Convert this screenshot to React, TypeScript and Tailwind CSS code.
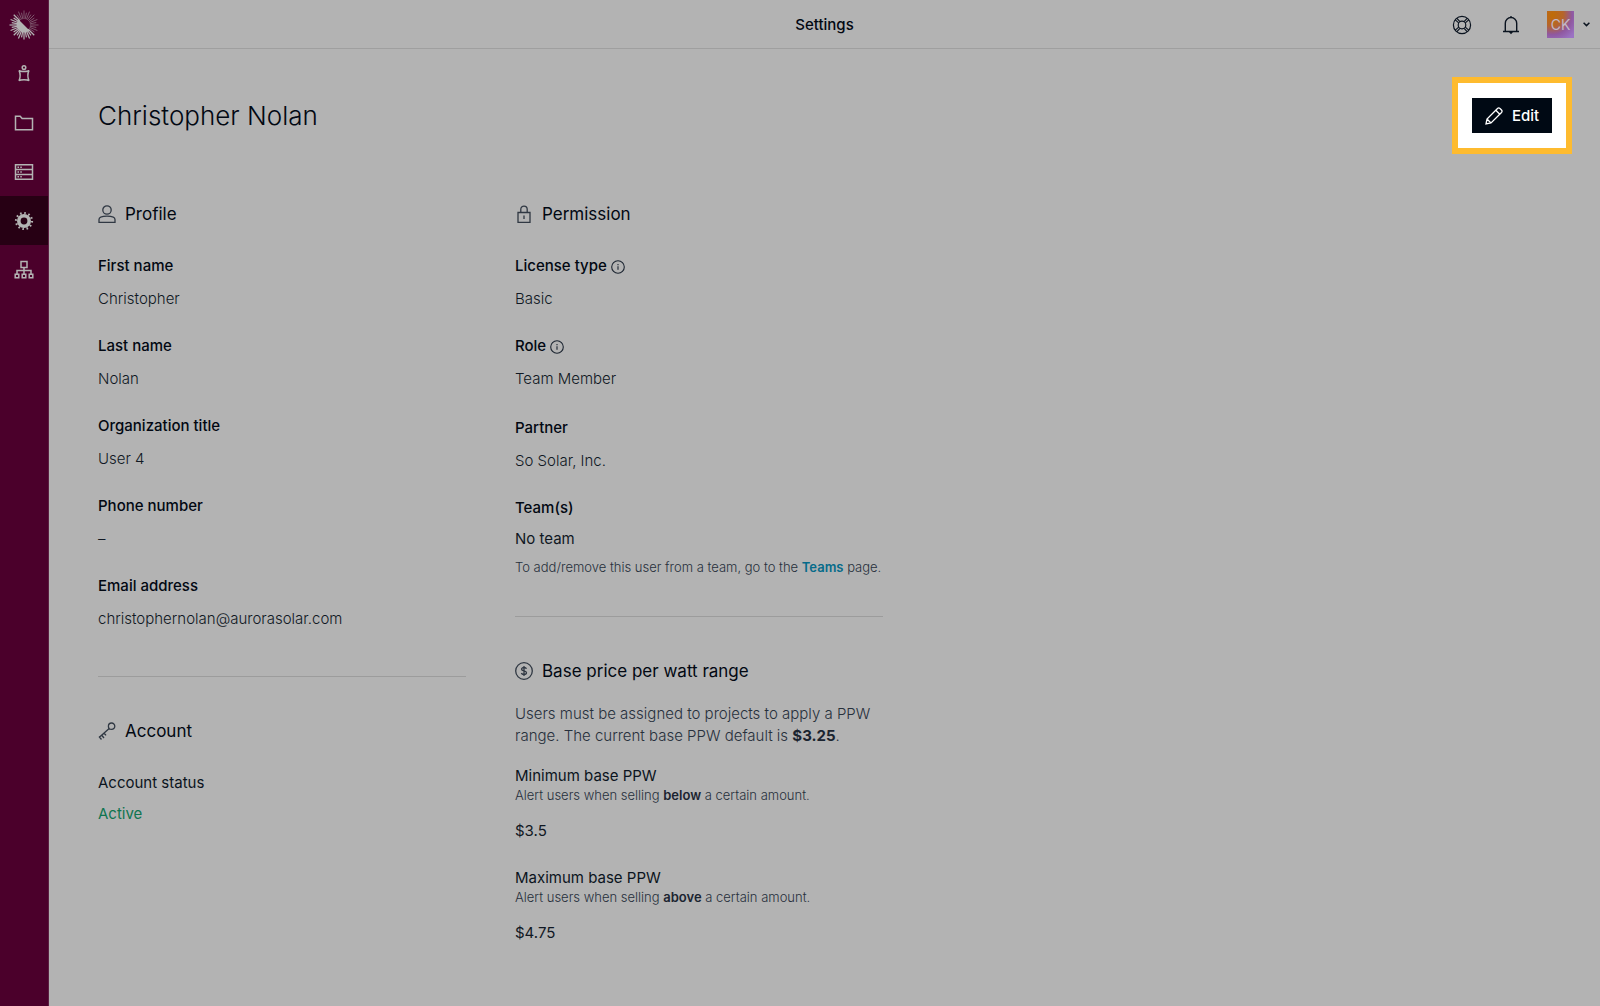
import type { ReactNode } from "react";

const LogoIcon = () => {
  const rays = Array.from({ length: 32 }, (_, i) => (i * Math.PI * 2) / 32);
  return (
    <svg width="30" height="30" viewBox="-15 -15 30 30" aria-hidden="true">
      {rays.map((angle, i) => {
        const x = Math.cos(angle);
        const y = Math.sin(angle);
        const outer = i % 2 ? 12.5 : 14.5;
        const bright = y > x - 0.1;
        return (
          <line
            key={i}
            x1={x * 6}
            y1={y * 6}
            x2={x * outer}
            y2={y * outer}
            stroke="#b3b3b3"
            strokeWidth={bright ? 1.2 : 0.8}
            opacity={bright ? 1 : 0.6}
          />
        );
      })}
      <path d="M-5.5-5.5 5.5 5.5A7.8 7.8 0 0 1-5.5-5.5Z" fill="#b3b3b3" />
    </svg>
  );
};

const navItems: { label: string; active?: boolean; icon: ReactNode }[] = [
  {
    label: "Leads",
    icon: (
      <>
        <circle cx="10" cy="3.6" r="1.8" />
        <path d="M5 6.400c1.300 1.400 8.700 1.400 10 0-1.600 3.400-1.600 6.600 0 10.400-1.300-1.500-8.700-1.500-10 0 1.600-3.800 1.600-7 0-10.400z" />
      </>
    ),
  },
  {
    label: "Projects",
    icon: <path d="M1.500 16.800V3.200h4.700l1.900 2.300h10.400v11.300z" />,
  },
  {
    label: "Database",
    icon: (
      <>
        <path d="M1.500 2.800h17v14.400h-17zM1.500 7.600h17M1.500 12.400h17" />
        <path d="M3.500 5.200h5M3.500 10h5M3.500 14.800h5" strokeDasharray="1.5 1.3" />
      </>
    ),
  },
  {
    label: "Settings",
    active: true,
    icon: (
      <>
        <circle cx="10" cy="10" r="5.2" strokeWidth="3.6" />
        <circle cx="10" cy="10" r="8" strokeWidth="2.2" strokeDasharray="1.6 2.589" />
      </>
    ),
  },
  {
    label: "Organization",
    icon: (
      <path d="M7 1.500h6v6H7zM10 7.500v6M3 13.500V10.500h14v3M1.200 14.200h3.600v3.600H1.200zM8.200 14.200h3.600v3.600H8.200zM15.200 14.200h3.600v3.600h-3.600z" />
    ),
  },
];

const Sidebar = () => (
  <nav className="flex w-[49px] shrink-0 flex-col border-r border-[#5c1f42] bg-[#4b002b]">
    <a href="#home" aria-label="Home" className="flex h-[49px] items-center justify-center">
      <LogoIcon />
    </a>
    {navItems.map(({ label, active, icon }) => (
      <a
        key={label}
        href={`#${label.toLowerCase()}`}
        aria-label={label}
        className={`flex h-[49px] items-center justify-center ${active ? "bg-[#270014]" : ""}`}
      >
        <svg width="20" height="20" viewBox="0 0 20 20" fill="none" stroke="#b3b3b3" strokeWidth="1.5">
          {icon}
        </svg>
      </a>
    ))}
  </nav>
);

const Header = () => (
  <header className="grid h-[49px] shrink-0 grid-cols-[1fr_auto_1fr] items-center border-b border-[#9f9f9f] pt-px pr-[10px]">
    <div />
    <h2 className="pl-[10px] text-[15px] font-medium text-[#020812]">Settings</h2>
    <div className="flex items-center justify-end">
      <button aria-label="Help" className="mr-[29px]">
        <svg width="20" height="20" viewBox="0 0 20 20" fill="none" stroke="#0b1420" strokeWidth="1.2">
          <circle cx="10" cy="10" r="8.6" />
          <circle cx="10" cy="10" r="3.8" />
          <path d="M3.300 4.900l3.400 3M4.900 3.300l3 3.400M16.700 4.900l-3.400 3M15.100 3.300l-3 3.400M3.300 15.100l3.400-3M4.900 16.700l3-3.400M16.700 15.100l-3.400-3M15.100 16.700l-3-3.400" />
        </svg>
      </button>
      <button aria-label="Notifications" className="mr-[26px]">
        <svg width="20" height="20" viewBox="0 0 20 20" fill="none" stroke="#0b1420" strokeWidth="1.4">
          <path d="M2 16.500h16M4.300 16.500V8.200a5.700 5.700 0 0 1 11.400 0v8.300M10 1v1.500" />
          <path d="M8 17h4l-2 2.200z" fill="#0b1420" stroke="none" />
        </svg>
      </button>
      <button aria-label="Account menu" className="flex items-center gap-[9px]">
        <span className="flex size-[27px] items-center justify-center bg-[radial-gradient(circle_at_20%_15%,#c06c05_0%,#b5652b_35%,#8f58a0_62%,#9b73c4_90%)] text-sm text-[#c2b8c8]">
          CK
        </span>
        <svg width="7" height="5" viewBox="0 0 7 5" fill="none" stroke="#0b1420" strokeWidth="1.5">
          <path d="M.6.800l2.900 2.800L6.400.800" />
        </svg>
      </button>
    </div>
  </header>
);

const PencilIcon = () => (
  <svg width="18" height="18" viewBox="0 0 18 18" fill="none" stroke="#fff" strokeWidth="1.3">
    <path d="M1 17l1-5L12.500 1.500c.8-.8 1.800-.6 2.500 0l1.500 1.500c.7.800.7 1.700 0 2.500L6 16zM10.800 3.200l4 4M2 12l4 4" />
  </svg>
);

const InfoIcon = () => (
  <svg width="14" height="14" viewBox="0 0 14 14" fill="none" stroke="#1b2430" strokeWidth="1.1">
    <circle cx="7" cy="7" r="6.300" />
    <path d="M7 6.200v3.600M7 4v1.200" />
  </svg>
);

const SectionTitle = ({ icon, children }: { icon: ReactNode; children: ReactNode }) => (
  <h2 className="flex h-6 items-center gap-[9px] text-[17px] leading-6 text-[#020812]">
    <svg width="18" height="18" viewBox="0 0 18 18" fill="none" stroke="#303843" strokeWidth="1.3">
      {icon}
    </svg>
    {children}
  </h2>
);

const Field = ({ label, info, children }: { label: string; info?: boolean; children: ReactNode }) => (
  <div className="pb-[23px]">
    <dt className="flex items-center gap-1 font-medium text-[#020812]">
      {label}
      {info && (
        <button aria-label={`About ${label}`} className="pt-[2px]">
          <InfoIcon />
        </button>
      )}
    </dt>
    <dd className="mt-[9px] font-light">{children}</dd>
  </div>
);

const PriceLimit = ({ label, word, value }: { label: string; word: string; value: string }) => (
  <div className="pb-[25px]">
    <dt className="leading-5 text-[#0b1420]">{label}</dt>
    <dd>
      <p className="text-[13px] leading-[18px] font-light text-[#27303c]">
        Alert users when selling <strong className="font-semibold text-[#1b2430]">{word}</strong> a certain amount.
      </p>
      <p className="mt-[15px]">{value}</p>
    </dd>
  </div>
);

const App = () => {
  return (
    <div className="flex min-h-screen bg-[#b3b3b3] font-['Inter',sans-serif] text-[15px] leading-6 text-[#101823]">
      <Sidebar />
      <div className="flex min-w-0 flex-1 flex-col">
        <Header />
        <main className="pt-7 pr-7 pl-[49px]">
          <div className="flex items-center justify-between">
            <h1 className="text-[26px] leading-8 font-light text-[#020812]">Christopher Nolan</h1>
            <div className="border-6 border-[#febb2f] bg-white px-[14px] py-[15px]">
              <button className="flex h-[35px] w-20 items-center justify-center gap-[9px] bg-[#000914] text-[15px] font-medium text-white">
                <PencilIcon />
                Edit
              </button>
            </div>
          </div>

          <div className="mt-12 grid grid-cols-[368px_368px] gap-[49px]">
            <div>
              <section>
                <SectionTitle
                  icon={
                    <>
                      <circle cx="9" cy="5" r="4.2" />
                      <path d="M1 17.300v-2.800c0-2 3.500-3.300 8-3.300s8 1.300 8 3.300v2.800z" />
                    </>
                  }
                >
                  Profile
                </SectionTitle>
                <dl className="mt-7">
                  <Field label="First name">Christopher</Field>
                  <Field label="Last name">Nolan</Field>
                  <Field label="Organization title">User 4</Field>
                  <Field label="Phone number">–</Field>
                  <Field label="Email address">christophernolan@aurorasolar.com</Field>
                </dl>
              </section>
              <hr className="mt-[22px] border-[#9c9c9c]" />
              <section className="mt-[42px]">
                <SectionTitle
                  icon={
                    <path d="M16.800 4.200a3.200 3.200 0 1 1-6.400 0a3.200 3.200 0 1 1 6.400 0M11.200 6.500L1 15.500M1 14.500l2.500 3M3.500 13l2.500 3M6 11l2 2.400" />
                  }
                >
                  Account
                </SectionTitle>
                <dl className="mt-7">
                  <dt className="text-[#0b1420]">Account status</dt>
                  <dd className="mt-[7px] text-[#0f7550]">Active</dd>
                </dl>
              </section>
            </div>

            <div>
              <section>
                <SectionTitle
                  icon={<path d="M3 7.500h12v9.800H3zM5.800 7.500V4.300a3.200 3.200 0 0 1 6.400 0v3.200M9 10.500v3.500" />}
                >
                  Permission
                </SectionTitle>
                <dl className="mt-7">
                  <Field label="License type" info>
                    Basic
                  </Field>
                  <Field label="Role" info>
                    Team Member
                  </Field>
                  <div className="pt-[2px]">
                    <Field label="Partner">So Solar, Inc.</Field>
                  </div>
                  <dt className="font-medium text-[#020812]">Team(s)</dt>
                  <dd className="mt-[7px]">
                    No team
                    <p className="mt-[6px] text-[13px] leading-5 font-light whitespace-nowrap text-[#27303c]">
                      To add/remove this user from a team, go to the{" "}
                      <a href="#teams" className="font-semibold text-[#066b8a]">
                        Teams
                      </a>{" "}
                      page.
                    </p>
                  </dd>
                </dl>
              </section>
              <hr className="mt-[39px] border-[#9c9c9c]" />
              <section className="mt-[42px]">
                <SectionTitle
                  icon={
                    <>
                      <circle cx="9" cy="9" r="8.300" />
                      <path d="M11.500 6.800c-.4-1-1.300-1.300-2.500-1.300-1.500 0-2.400.6-2.400 1.700C6.600 9.600 11.500 8.200 11.500 10.800c0 1.100-1 1.800-2.500 1.800-1.400 0-2.300-.5-2.600-1.600M9 4v10" />
                    </>
                  }
                >
                  Base price per watt range
                </SectionTitle>
                <p className="mt-5 leading-[22px] font-light text-[#27303c]">
                  Users must be assigned to projects to apply a PPW range. The current base PPW default is{" "}
                  <strong className="font-bold text-[#1b2430]">$3.25</strong>.
                </p>
                <dl className="mt-[19px]">
                  <PriceLimit label="Minimum base PPW" word="below" value="$3.5" />
                  <PriceLimit label="Maximum base PPW" word="above" value="$4.75" />
                </dl>
              </section>
            </div>
          </div>
        </main>
      </div>
    </div>
  );
};

export default App;
